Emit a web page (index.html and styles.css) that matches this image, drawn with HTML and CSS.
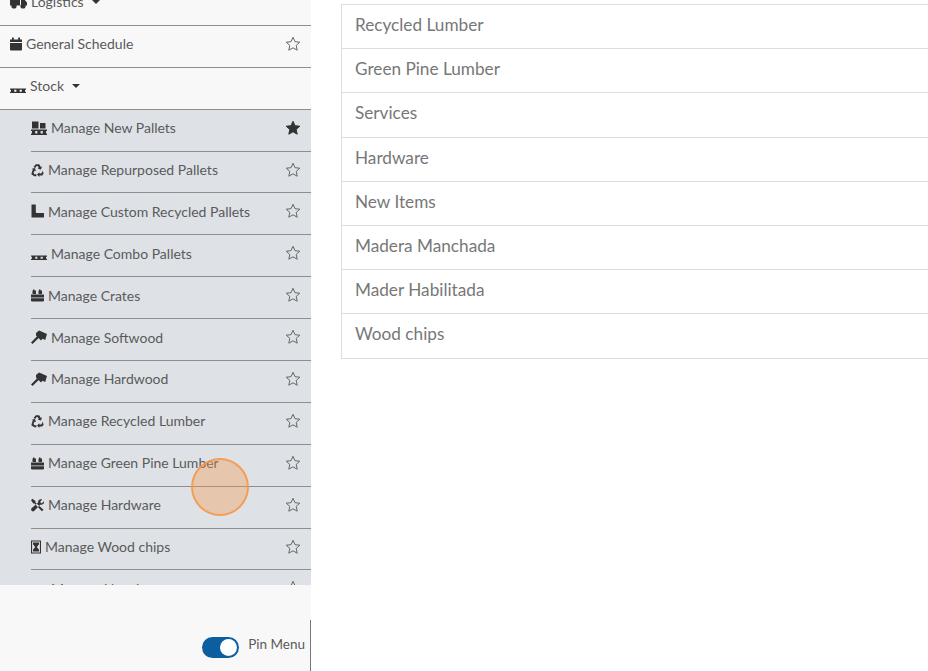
FILE: index.html
```html
<!DOCTYPE html>
<html lang="en">
	<head>
		<meta charset="UTF-8">
		<meta name="viewport" content="width=device-width, initial-scale=1.0">
		<title>Stock</title>
		<link rel="stylesheet" href="styles.css">
	</head>
	<body>
		<svg class="icon-defs" aria-hidden="true">
			<symbol id="i-truck" viewBox="0 0 17 14"><path d="M0 1.500h10v9H0zM11 4h3l3 3.500v3h-6z"/><circle cx="4" cy="11" r="2.600"/><circle cx="13" cy="11" r="2.600"/></symbol>
			<symbol id="i-calendar" viewBox="0 0 12 14"><path d="M2 .5h1.800V2.500h4.400V.5H10V2.500h2V5H0V2.500h2zM0 6h12v6.500a1 1 0 0 1-1 1H1a1 1 0 0 1-1-1z"/></symbol>
			<symbol id="i-pallet" viewBox="0 0 16 14"><path d="M0 9.500h16v1.200H0zM0 12.800h16V14H0zM1 10.700h3.200v2.100H1zM6.400 10.700h3.200v2.100H6.400zM11.800 10.700H15v2.100h-3.200z"/></symbol>
			<symbol id="i-boxes" viewBox="0 0 16 14"><path d="M1 .5h6.500v7H1zM9 2h5.500v5.500H9zM0 8.500h16v1.400H0zM0 12.600h16V14H0zM1 9.900h3.200v2.700H1zM6.400 9.900h3.200v2.700H6.400zM11.800 9.900H15v2.700h-3.200z"/></symbol>
			<symbol id="i-recycle" viewBox="0 0 13 14"><path d="M4.800 1.200h3.400l1.600 2.700 1.200-.7-1 3.300-3.300-.8 1.100-.7-1.200-2.100H5.600L4.300 5 2.500 4zM11 7.400l1.700 2.900-1.400 2.300H8.400v1.300L6 11.500l2.400-2.300v1.400h1.900l.8-1.300zM1.800 6.300l-1.100-.6 3.300-.8 1 3.300-1.200-.7-1.300 2.200.9 1.500h2v2H3.300L.3 11.200z"/></symbol>
			<symbol id="i-boot" viewBox="0 0 13 14"><path d="M.5 .5h4.300V8c0 .8.500 1.100 1.200 1.100h6.800c.2 0 .2.200.2.400V13.500H1a.5.5 0 0 1-.5-.5z"/></symbol>
			<symbol id="i-crates" viewBox="0 0 13 14"><path d="M2 1.500h1.500v1H5v3.500H1.500V2.500H2zM8 1.500h1.500v1H11v3.500H7.500V2.500H8zM0 6.600h13v3H0zM0 10.300h13v2.200a1 1 0 0 1-1 1H1a1 1 0 0 1-1-1z"/></symbol>
			<symbol id="i-axe" viewBox="0 0 16 14"><path d="M0 12.600 6.800 5.500 8.500 7.200 1.500 14zM5 3 8 .5l3 1.200 5 2.300-1.800 6-2.700-1.200-1.500 1.700L5 5.500z"/></symbol>
			<symbol id="i-tools" viewBox="0 0 14 14"><path d="M1.500 .3 4.800 2.800v1.400l8.700 7.800-1.800 1.800-7.900-8.400H2.500L0 2zM13.900 3 11.500 5.300 9.800 3.800 12 1.200C9.800 0 7.300 1.800 7.700 4.300L.6 10.600a2 2 0 0 0 2.800 2.800L10 6.600c2.600.4 4.700-1.200 3.900-3.600z"/></symbol>
			<symbol id="i-chips" viewBox="0 0 10 14"><path fill-rule="evenodd" d="M0 .5h10v13H0zM1.100 1.600v10.800h7.800V1.600z"/><path d="M2 2.500h6v1.800L5.800 7 8 9.700v1.800H2V9.700L4.200 7 2 4.300z"/></symbol>
			<symbol id="i-star" viewBox="0 0 16 16"><path d="M8 1.300 10 5.700 14.800 6.200 11.200 9.400 12.200 14.200 8 11.800 3.800 14.200 4.800 9.400 1.200 6.200 6 5.700z"/></symbol>
		</svg>

		<div class="page">
			<nav class="sidebar">
				<div class="menu">
					<ul class="menu-list">
						<li class="menu-row">
							<span class="menu-label"><svg class="ico w17"><use href="#i-truck"/></svg>Logistics<span class="caret"></span></span>
						</li>
						<li class="menu-row">
							<span class="menu-label"><svg class="ico w12"><use href="#i-calendar"/></svg>General Schedule</span>
							<svg class="star"><use href="#i-star"/></svg>
						</li>
						<li class="menu-row">
							<span class="menu-label"><svg class="ico w16"><use href="#i-pallet"/></svg>Stock<span class="caret"></span></span>
						</li>
					</ul>
					<ul class="submenu">
						<li class="menu-row">
							<span class="menu-label"><svg class="ico w16"><use href="#i-boxes"/></svg>Manage New Pallets</span>
							<svg class="star on"><use href="#i-star"/></svg>
						</li>
						<li class="menu-row">
							<span class="menu-label"><svg class="ico w13"><use href="#i-recycle"/></svg>Manage Repurposed Pallets</span>
							<svg class="star"><use href="#i-star"/></svg>
						</li>
						<li class="menu-row">
							<span class="menu-label"><svg class="ico w13"><use href="#i-boot"/></svg>Manage Custom Recycled Pallets</span>
							<svg class="star"><use href="#i-star"/></svg>
						</li>
						<li class="menu-row">
							<span class="menu-label"><svg class="ico w16"><use href="#i-pallet"/></svg>Manage Combo Pallets</span>
							<svg class="star"><use href="#i-star"/></svg>
						</li>
						<li class="menu-row">
							<span class="menu-label"><svg class="ico w13"><use href="#i-crates"/></svg>Manage Crates</span>
							<svg class="star"><use href="#i-star"/></svg>
						</li>
						<li class="menu-row">
							<span class="menu-label"><svg class="ico w16"><use href="#i-axe"/></svg>Manage Softwood</span>
							<svg class="star"><use href="#i-star"/></svg>
						</li>
						<li class="menu-row">
							<span class="menu-label"><svg class="ico w16"><use href="#i-axe"/></svg>Manage Hardwood</span>
							<svg class="star"><use href="#i-star"/></svg>
						</li>
						<li class="menu-row">
							<span class="menu-label"><svg class="ico w13"><use href="#i-recycle"/></svg>Manage Recycled Lumber</span>
							<svg class="star"><use href="#i-star"/></svg>
						</li>
						<li class="menu-row">
							<span class="menu-label"><svg class="ico w13"><use href="#i-crates"/></svg>Manage Green Pine Lumber</span>
							<svg class="star"><use href="#i-star"/></svg>
						</li>
						<li class="menu-row">
							<span class="menu-label"><svg class="ico w13"><use href="#i-tools"/></svg>Manage Hardware</span>
							<svg class="star"><use href="#i-star"/></svg>
						</li>
						<li class="menu-row">
							<span class="menu-label"><svg class="ico w10"><use href="#i-chips"/></svg>Manage Wood chips</span>
							<svg class="star"><use href="#i-star"/></svg>
						</li>
						<li class="menu-row">
							<span class="menu-label"><svg class="ico w16"><use href="#i-pallet"/></svg>Manage New Items</span>
							<svg class="star"><use href="#i-star"/></svg>
						</li>
					</ul>
				</div>
				<div class="pin-bar">
					<span class="toggle"><span class="toggle-knob"></span></span>
					<span class="pin-label">Pin Menu</span>
				</div>
			</nav>

			<main class="content">
				<ul class="category-list">
					<li>Recycled Lumber</li>
					<li>Green Pine Lumber</li>
					<li>Services</li>
					<li>Hardware</li>
					<li>New Items</li>
					<li>Madera Manchada</li>
					<li>Mader Habilitada</li>
					<li>Wood chips</li>
				</ul>
			</main>
		</div>

		<div class="click-marker"></div>
	</body>
</html>
```

FILE: styles.css
```css
html, body
{
	margin: 0;
	height: 100%;
	overflow: hidden;
}
body
{
	font-family: "Lato", "Open Sans", sans-serif;
	background-color: #fff;
	color: #5a5a5a;
}
ul
{
	list-style: none;
	margin: 0;
	padding: 0;
}
.icon-defs
{
	display: none;
}
.page
{
	display: flex;
	height: 671px;
}

/* sidebar */
.sidebar
{
	width: 311px;
	flex: none;
	display: flex;
	flex-direction: column;
	background-color: #f8f8f8;
}
.menu
{
	height: 585px;
	flex: none;
	overflow: hidden;
}
.menu-list
{
	margin-top: -16px;
}
.menu-row
{
	box-sizing: border-box;
	height: 41.9px;
	display: flex;
	align-items: center;
	justify-content: space-between;
	padding: 0 10px 5px 10px;
	border-bottom: 1px solid #8e8e8e;
	font-size: 14px;
}
.menu-label
{
	display: flex;
	align-items: center;
	white-space: nowrap;
}
.submenu
{
	background-color: #dee2e7;
	padding-left: 31px;
}
.submenu .menu-row
{
	padding-left: 0;
}
.ico
{
	height: 14px;
	margin-right: 4px;
	fill: #333;
	flex: none;
}
.w17 { width: 17px; }
.w16 { width: 16px; }
.w13 { width: 13px; }
.w12 { width: 12px; }
.w10 { width: 10px; }
.caret
{
	width: 0;
	height: 0;
	margin-left: 8px;
	border-left: 4px solid transparent;
	border-right: 4px solid transparent;
	border-top: 4px solid #333;
}
.star
{
	width: 16px;
	height: 16px;
	flex: none;
	fill: none;
	stroke: #666;
	stroke-width: 1;
}
.star.on
{
	fill: #333;
	stroke: #333;
}

/* pin toggle */
.pin-bar
{
	flex: 1;
	display: flex;
	align-items: flex-start;
	justify-content: flex-end;
	padding: 52px 6px 0 0;
	font-size: 13.500px;
	position: relative;
}
.pin-bar::after
{
	content: "";
	position: absolute;
	right: 0;
	top: 35px;
	bottom: 0;
	width: 1px;
	background-color: #777;
}
.toggle
{
	box-sizing: border-box;
	width: 37px;
	height: 21px;
	padding: 2px;
	margin-right: 9px;
	border-radius: 11px;
	background-color: #0d5e9f;
	display: flex;
	justify-content: flex-end;
}
.toggle-knob
{
	width: 17px;
	height: 17px;
	border-radius: 50%;
	background-color: #fff;
}
.pin-label
{
	line-height: 14px;
}

/* main list */
.content
{
	flex: 1;
	padding: 4px 0 0 30px;
	margin-right: -10px;
}
.category-list
{
	border-top: 1px solid #ddd;
	border-left: 1px solid #ddd;
	border-right: 1px solid #ddd;
}
.category-list li
{
	box-sizing: border-box;
	height: 44.2px;
	padding: 9px 13px 0 13px;
	border-bottom: 1px solid #ddd;
	font-size: 17.200px;
	line-height: 22px;
	color: #777;
}

/* recorded click marker, sits over the page */
.click-marker
{
	position: absolute;
	left: 191px;
	top: 458px;
	box-sizing: border-box;
	width: 58px;
	height: 58px;
	border-radius: 50%;
	background-color: rgba(245, 150, 70, 0.35);
	border: 2px solid rgba(245, 150, 70, 0.85);
}
```
